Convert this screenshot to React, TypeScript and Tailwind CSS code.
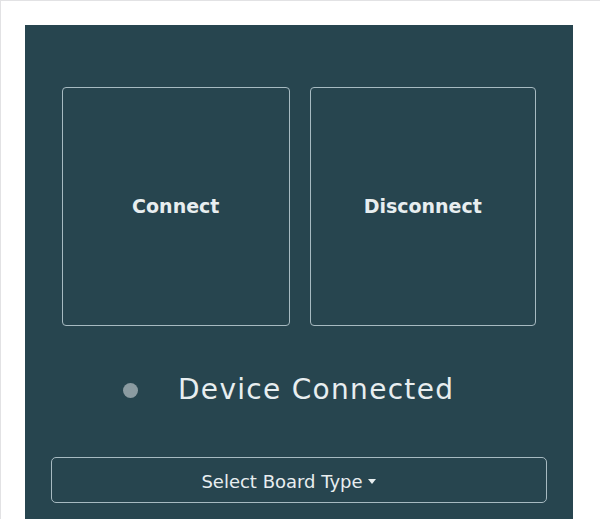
export default function App() {
    return (
        <div className="min-h-[519px] w-[600px] overflow-hidden border-t border-l border-[#e2e2e4] bg-white pl-[24px] pt-[24px]">
            <div className="h-[495px] w-[548px] bg-[#27454f] px-[37px] pt-[62px] text-[#e8eef0]" style={{ fontFamily: '"DejaVu Sans", "Lato", sans-serif' }}>
                <div className="flex gap-[20px]">
                    <button className="flex h-[239px] w-[228px] items-center justify-center rounded-[4px] border border-[#a7bac1] text-[19px] font-bold">
                        Connect
                    </button>
                    <button className="flex h-[239px] w-[227px] items-center justify-center rounded-[4px] border border-[#a7bac1] text-[19px] font-bold">
                        Disconnect
                    </button>
                </div>
                <div className="mt-[43px] flex items-center pl-[61px]">
                    <span className="h-[15px] w-[15px] rounded-full bg-[#8b9ba1]" />
                    <span className="ml-[40px] text-[28px] font-normal tracking-[1.3px]">Device Connected</span>
                </div>
                <div className="-mx-[11px] mt-[46px]">
                    <button className="flex h-[46px] w-full items-center justify-center gap-[5px] rounded-[5px] border border-[#a7bac1] pt-[2px] pr-[21px] text-[18px] font-normal">
                        Select Board Type
                        <span className="mt-[1px] h-0 w-0 border-x-[4px] border-t-[5px] border-x-transparent border-t-[#e8eef0]" />
                    </button>
                </div>
            </div>
        </div>
    );
}
